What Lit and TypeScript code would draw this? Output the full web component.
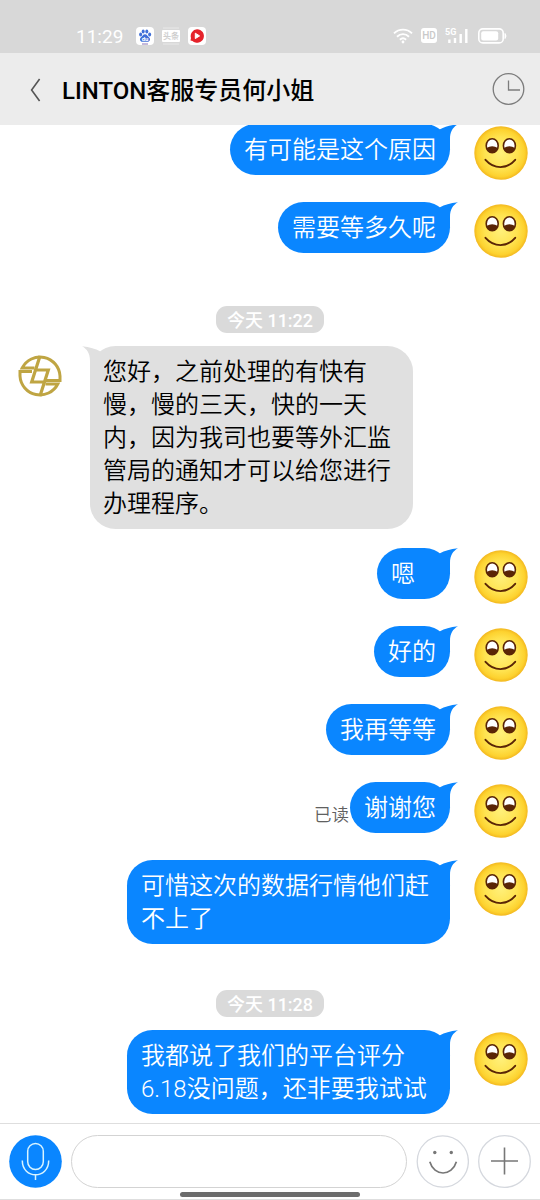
import { LitElement, html, css, svg, nothing } from "lit";
import { customElement, property } from "lit/decorators.js";

type Entry =
  | { kind: "me"; text: string; read?: boolean }
  | { kind: "agent"; text: string }
  | { kind: "time"; text: string };

const ENTRIES: Entry[] = [
  { kind: "me", text: "有可能是这个原因" },
  { kind: "me", text: "需要等多久呢" },
  { kind: "time", text: "今天 11:22" },
  {
    kind: "agent",
    text: "您好，之前处理的有快有慢，慢的三天，快的一天内，因为我司也要等外汇监管局的通知才可以给您进行办理程序。",
  },
  { kind: "me", text: "嗯" },
  { kind: "me", text: "好的" },
  { kind: "me", text: "我再等等" },
  { kind: "me", text: "谢谢您", read: true },
  { kind: "me", text: "可惜这次的数据行情他们赶不上了" },
  { kind: "time", text: "今天 11:28" },
  { kind: "me", text: "我都说了我们的平台评分6.18没问题，还非要我试试" },
];

@customElement("status-bar")
class StatusBar extends LitElement {
  static styles = css`
    :host {
      display: flex;
      align-items: center;
      height: 53px;
      box-sizing: border-box;
      padding: 18px 33px 0 76px;
      background: #d8d8d8;
      color: #fff;
    }
    .clock { font-size: 19px; width: 60px; line-height: 32px; padding-top: 2px; }
    .apps { display: flex; gap: 8px; flex: 1; }
    .signals { display: flex; align-items: center; }
    svg { display: block; }
    .hd { margin-left: 8px; }
    .net { margin-left: 8px; }
    .battery { margin-left: 9px; }
    .mini { font: 700 8px "Noto Sans CJK SC", sans-serif; }
    .hdtext { font: 500 10px Roboto, sans-serif; }
    .g5 { font: 700 9px Roboto, sans-serif; }
    .du { font: 700 6px Roboto, sans-serif; }
  `;
  render() {
    return html`
      <span class="clock">11:29</span>
      <div class="apps">
        <svg width="18" height="18" viewBox="0 0 18 18">
          <rect width="18" height="18" rx="4" fill="#fff" />
          <g fill="#3f6fd8">
            <ellipse cx="4.6" cy="7.6" rx="1.5" ry="2" />
            <ellipse cx="7.2" cy="4.4" rx="1.5" ry="2" />
            <ellipse cx="10.8" cy="4.4" rx="1.5" ry="2" />
            <ellipse cx="13.6" cy="7.6" rx="1.5" ry="2" />
            <path d="M9 7.2C11 7.2 11.8 9.2 13 10.3C15 12.2 13.8 14.8 11.6 14.8H6.4C4.2 14.8 3 12.2 5 10.3C6.2 9.2 7 7.2 9 7.2Z" />
          </g>
          <text class="du" x="9" y="13.7" text-anchor="middle" fill="#fff">du</text>
          <path d="M6 17H12" stroke="#8a75b8" />
        </svg>
        <svg width="18" height="18" viewBox="0 0 18 18">
          <rect y="3" width="18" height="12" rx="1" fill="#fff" />
          <path d="M1 1H17M1 17H17" stroke="#e9e9e9" />
          <text class="mini" x="9" y="12" text-anchor="middle" fill="#cfcfcf">头条</text>
        </svg>
        <svg width="18" height="18" viewBox="0 0 18 18">
          <rect width="18" height="18" rx="4" fill="#fff" />
          <path d="M9 2.2A6.8 6.8 0 1 1 4.5 14L2.5 13.5L3 11A6.8 6.8 0 0 1 9 2.2Z" fill="#e5232b" />
          <path d="M7.3 6.2L11.6 8.9L7.3 11.6Z" fill="#fff" stroke="#fff" stroke-linejoin="round" />
        </svg>
      </div>
      <div class="signals">
        <svg width="20" height="16" viewBox="0 0 20 16" fill="none" stroke="#fff" stroke-width="1.9">
          <path d="M1 5.4C6 .4 14 .4 19 5.4M4 8.7C7.5 5.3 12.5 5.3 16 8.7M6.9 11.8C8.8 10 11.2 10 13.1 11.8" />
          <circle cx="10" cy="14" r="1.4" fill="#fff" stroke="none" />
        </svg>
        <svg class="hd" width="16" height="15" viewBox="0 0 16 15">
          <rect width="16" height="15" rx="3" fill="#fff" />
          <text class="hdtext" x="8" y="11.2" text-anchor="middle" fill="#c9c9c9">HD</text>
        </svg>
        <svg class="net" width="24" height="17" viewBox="0 0 24 17">
          <text class="g5" x="0" y="8" fill="#fff">5G</text>
          <path d="M4.4 12.5V16M10 11V16M15.7 7V16M21.3 2V16" stroke="#fff" stroke-width="2.4" />
        </svg>
        <svg class="battery" width="29" height="16" viewBox="0 0 29 16">
          <rect x=".8" y=".9" width="24.4" height="14" rx="4" fill="none" stroke="#fff" stroke-width="1.6" />
          <rect x="3.2" y="3.2" width="17" height="9.4" rx="2" fill="#fff" />
          <path d="M27 5.5Q29 8 27 10.5Z" fill="#fff" stroke="#fff" />
        </svg>
      </div>
    `;
  }
}

@customElement("nav-bar")
class NavBar extends LitElement {
  static styles = css`
    :host {
      display: flex;
      align-items: center;
      height: 72px;
      box-sizing: border-box;
      padding: 1px 15px 0 30px;
      background: #ececec;
    }
    svg { display: block; }
    h1 {
      flex: 1;
      margin: 0 0 0 21px;
      padding-top: 3px;
      font-size: 24px;
      line-height: 36px;
      font-weight: 500;
      color: #000;
    }
  `;
  render() {
    return html`
      <svg width="11" height="24" viewBox="0 0 11 24" fill="none" stroke="#555" stroke-width="1.6">
        <path d="M9.6 1L1.6 12L9.6 23" />
      </svg>
      <h1>LINTON客服专员何小姐</h1>
      <svg width="33" height="33" viewBox="0 0 33 33" fill="none" stroke="#7c7c7c" stroke-width="1.3">
        <circle cx="16.5" cy="16" r="15.3" />
        <path d="M16.5 7.5V17H28" />
      </svg>
    `;
  }
}

@customElement("chat-row")
class ChatRow extends LitElement {
  @property({ attribute: false }) entry!: Entry;

  static styles = css`
    :host { display: block; }
    svg { display: block; flex: none; }
    .row { display: flex; align-items: flex-start; }
    .me { justify-content: flex-end; padding-right: 12px; min-height: 58px; margin-bottom: 20px; }
    .agent { padding-left: 18px; margin-bottom: 19px; }
    .bubble {
      position: relative;
      box-sizing: border-box;
      min-width: 73px;
      max-width: 323px;
      padding: 10px 14px 8px 14px;
      border-radius: 25.5px;
      font-size: 24px;
      font-weight: 350;
      line-height: 33px;
    }
    .me .bubble { background: #0a86ff; color: #fff; margin-right: 24px; }
    .agent .bubble { background: #e0e0e0; color: #000; margin-left: 28px; padding-left: 13px; }
    .tail { position: absolute; top: 0; }
    .me .tail { right: -8px; }
    .agent .tail { left: -8px; }
    .face { margin-top: 2px; }
    .logo { margin-top: 8px; }
    .read { margin: 20px 1px 0 0; font-size: 17.5px; font-weight: 350; line-height: 26px; color: #606060; }
    .time { display: flex; justify-content: center; margin: 46px 0 13px; }
    .pill {
      box-sizing: border-box;
      height: 27px;
      padding: 0 10.5px;
      border-radius: 11px;
      background: #dadada;
      color: #fff;
      font-size: 18px;
      font-weight: 500;
      line-height: 29px;
    }
  `;

  private face() {
    return html`
      <svg class="face" width="54" height="54" viewBox="0 0 54 54">
        <defs>
          <radialGradient id="skin">
            <stop offset="0" stop-color="#fff07a" />
            <stop offset=".6" stop-color="#ffe350" />
            <stop offset=".88" stop-color="#fdd22f" />
            <stop offset="1" stop-color="#f3b81f" />
          </radialGradient>
        </defs>
        <circle cx="27" cy="27" r="26.7" fill="url(#skin)" />
        ${[18.2, 35.4].map(
          (x) => svg`
            <ellipse cx=${x} cy="19.8" rx="6" ry="7" fill="#fff" stroke="#5a2506" stroke-width="1.6" />
            <path d="M${x - 5.7} 22Q${x} 18.4 ${x + 5.7} 22A6 7 0 0 1 ${x - 5.7} 22Z" fill="#5a2506" />
          `
        )}
        <path d="M11.5 33.8C20 43.5 33 43.5 41.2 33.8" fill="none" stroke="#5a2506" stroke-width="1.9" stroke-linecap="round" />
      </svg>
    `;
  }

  private logo() {
    return html`
      <svg class="logo" width="44" height="44" viewBox="0 0 44 44" fill="none" stroke="#bfa543" stroke-width="3">
        <path d="M16.5 14H4.2A20 20 0 0 1 42 22V26.5H28" />
        <path d="M27.5 30H39.8A20 20 0 0 1 2 22V17.5H14" />
        <path d="M22 2L13.7 28H26.5M22 42L30.3 16H17.5" stroke-width="3.2" />
      </svg>
    `;
  }

  private tail(mirrored: boolean) {
    return html`
      <svg class="tail" width="22" height="26" viewBox="0 0 22 26">
        <path
          transform=${mirrored ? "translate(22 0) scale(-1 1)" : "translate(0 0)"}
          fill=${mirrored ? "#e0e0e0" : "#0a86ff"}
          d="M0 8L4 5.2C8.5 2.8 14 1.2 22 .3C17 3 14 7.5 14 15V26H0Z"
        />
      </svg>
    `;
  }

  render() {
    const e = this.entry;
    if (e.kind === "time") {
      return html`<div class="time"><span class="pill">${e.text}</span></div>`;
    }
    if (e.kind === "agent") {
      return html`<div class="row agent">
        ${this.logo()}
        <div class="bubble">${this.tail(true)}${e.text}</div>
      </div>`;
    }
    return html`<div class="row me">
      ${e.read ? html`<span class="read">已读</span>` : nothing}
      <div class="bubble">${this.tail(false)}${e.text}</div>
      ${this.face()}
    </div>`;
  }
}

@customElement("input-bar")
class InputBar extends LitElement {
  static styles = css`
    :host {
      display: flex;
      flex-direction: column;
      height: 77px;
      box-sizing: border-box;
      border-top: 1px solid #dedede;
      border-bottom: 1px solid #dedede;
      background: #fff;
    }
    .tools { display: flex; align-items: center; padding: 11px 9px 0; height: 53px; }
    svg { display: block; flex: none; }
    .field {
      flex: 1;
      height: 53px;
      box-sizing: border-box;
      margin: 0 9px;
      border: 1px solid #d3d3d3;
      border-radius: 27px;
    }
    .plus { margin-left: 9px; }
    .home { width: 180px; height: 5px; margin: 4px auto 0; border-radius: 3px; background: #6c6c6c; flex: none; }
  `;
  render() {
    return html`
      <div class="tools">
        <svg width="53" height="53" viewBox="0 0 53 53" fill="none" stroke="#d9f4ff" stroke-width="1.5">
          <circle cx="26.5" cy="26.5" r="26.3" fill="#0a86ff" stroke="none" />
          <rect x="18.7" y="8.5" width="15.6" height="26" rx="7.8" />
          <path d="M13.3 25.5C13.3 44.5 39.7 44.5 39.7 25.5M26.5 39.8V45" />
        </svg>
        <div class="field"></div>
        <svg width="53" height="53" viewBox="0 0 53 53" fill="none">
          <circle cx="26.8" cy="26.5" r="25.6" stroke="#d5d8de" stroke-width="1.3" />
          <circle cx="18.8" cy="17.5" r="1.7" fill="#777" />
          <circle cx="35.3" cy="17.5" r="1.7" fill="#777" />
          <path d="M13.8 26.8C18 41.7 36 41.7 40.4 26.8" stroke="#777" stroke-width="1.7" />
        </svg>
        <svg class="plus" width="53" height="53" viewBox="0 0 53 53" fill="none">
          <circle cx="26.5" cy="26.5" r="25.8" stroke="#d5d8de" stroke-width="1.3" />
          <path d="M26.5 12.5V39.5M13 26H40" stroke="#777" stroke-width="1.6" />
        </svg>
      </div>
      <div class="home"></div>
    `;
  }
}

@customElement("app-root")
class AppRoot extends LitElement {
  static styles = css`
    :host {
      display: flex;
      flex-direction: column;
      width: 540px;
      height: 1200px;
      overflow: hidden;
      background: #fff;
      font-family: Roboto, "Noto Sans CJK SC", sans-serif;
    }
    .messages { flex: 1; min-height: 0; overflow: hidden; }
    .list { margin-top: -1px; }
  `;
  render() {
    return html`
      <status-bar></status-bar>
      <nav-bar></nav-bar>
      <div class="messages">
        <div class="list">${ENTRIES.map((e) => html`<chat-row .entry=${e}></chat-row>`)}</div>
      </div>
      <input-bar></input-bar>
    `;
  }
}
